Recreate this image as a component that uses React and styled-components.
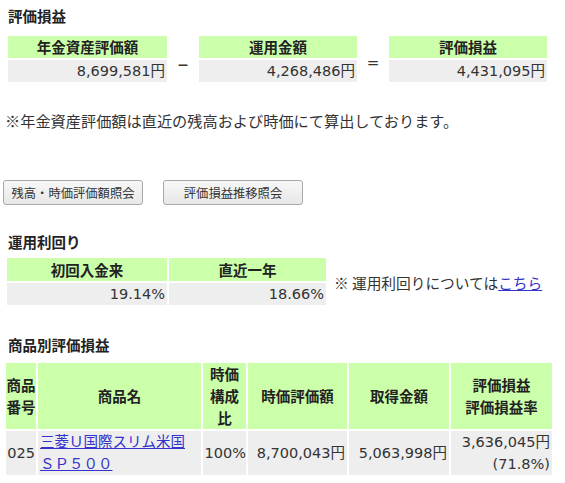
import React from 'react';
import styled, { createGlobalStyle } from 'styled-components';

const GlobalStyle = createGlobalStyle`
  html, body {
    margin: 0;
    padding: 0;
    background: #fff;
  }
  body {
    font-family: "DejaVu Sans", "Noto Sans CJK JP", sans-serif;
    font-size: 14.5px;
    color: #333;
  }
`;

const GREEN = '#ccffaa';
const GRAY = '#eeeeee';

const Page = styled.div`
  width: 565px;
  padding: 5px 0 0 0;
`;

const Title = styled.h2`
  margin: ${({ top }) => top || 0}px 0 0 8px;
  font-size: 14.5px;
  line-height: 22px;
  font-weight: bold;
  color: #222;
  font-family: "Noto Sans CJK JP", sans-serif;
`;

const Summary = styled.div`
  display: flex;
  margin: 9px 0 0 8px;
`;

const SumBox = styled.div`
  width: ${({ w }) => w}px;
  display: flex;
  flex-direction: column;
  gap: 2px;
`;

const SumHead = styled.div`
  height: 22px;
  line-height: 22px;
  background: ${GREEN};
  text-align: center;
  font-weight: bold;
  color: #222;
  font-family: "Noto Sans CJK JP", sans-serif;
`;

const SumValue = styled.div`
  height: 22px;
  line-height: 22px;
  background: ${GRAY};
  text-align: right;
  padding-right: 2px;
`;

const Operator = styled.div`
  width: 32px;
  display: flex;
  align-items: center;
  justify-content: center;
  padding-top: 8px;
  font-size: ${({ size }) => size || 15}px;
  color: #333;
`;

const Note = styled.p`
  margin: 27px 0 0 5px;
  line-height: 22px;
  font-size: 15.2px;
  font-family: "Noto Sans CJK JP", sans-serif;
`;

const ButtonRow = styled.div`
  display: flex;
  gap: 20px;
  margin: 49px 0 0 3px;
`;

const Button = styled.button`
  width: 140px;
  height: 25px;
  padding: 0;
  border: 1px solid #a9a9a9;
  border-radius: 3px;
  background: linear-gradient(#f7f7f7, #e8e8e8);
  font-family: "Noto Sans CJK JP", sans-serif;
  font-size: 12.3px;
  color: #333;
`;

const YieldRow = styled.div`
  display: flex;
  align-items: center;
  gap: 8px;
  margin: 5px 0 0 7px;
`;

const Grid = styled.div`
  display: grid;
  grid-template-columns: ${({ cols }) => cols};
  grid-template-rows: ${({ rows }) => rows};
  gap: 2px;
`;

const HeadCell = styled.div`
  background: ${GREEN};
  display: flex;
  align-items: center;
  justify-content: center;
  text-align: center;
  font-weight: bold;
  line-height: 22px;
  color: #222;
  font-family: "Noto Sans CJK JP", sans-serif;
`;

const Cell = styled.div`
  background: ${GRAY};
  display: flex;
  flex-direction: column;
  justify-content: center;
  align-items: ${({ left }) => (left ? 'flex-start' : 'flex-end')};
  text-align: ${({ left }) => (left ? 'left' : 'right')};
  line-height: 22px;
  padding: 0 ${({ pad }) => (pad === undefined ? 2 : pad)}px;
  white-space: nowrap;
`;

const SideNote = styled.span`
  font-family: "Noto Sans CJK JP", sans-serif;
  font-size: 14.7px;
  padding-top: 2px;
`;

const Link = styled.a`
  color: #3333cc;
  text-decoration: underline;
`;

const Products = styled(Grid)`
  margin: 7px 0 0 6px;
`;

const summary = [
  { label: '年金資産評価額', value: '8,699,581円', w: 159 },
  { label: '運用金額', value: '4,268,486円', w: 158 },
  { label: '評価損益', value: '4,431,095円', w: 158 },
];

export default function App() {
  return (
    <Page>
      <GlobalStyle />
      <Title>評価損益</Title>
      <Summary>
        <SumBox w={summary[0].w}>
          <SumHead>{summary[0].label}</SumHead>
          <SumValue>{summary[0].value}</SumValue>
        </SumBox>
        <Operator size={22}>–</Operator>
        <SumBox w={summary[1].w}>
          <SumHead>{summary[1].label}</SumHead>
          <SumValue>{summary[1].value}</SumValue>
        </SumBox>
        <Operator>=</Operator>
        <SumBox w={summary[2].w}>
          <SumHead>{summary[2].label}</SumHead>
          <SumValue>{summary[2].value}</SumValue>
        </SumBox>
      </Summary>
      <Note>※年金資産評価額は直近の残高および時価にて算出しております。</Note>

      <ButtonRow>
        <Button>残高・時価評価額照会</Button>
        <Button>評価損益推移照会</Button>
      </ButtonRow>

      <Title top={26}>運用利回り</Title>
      <YieldRow>
        <Grid cols="160px 157px" rows="23px 22px">
          <HeadCell>初回入金来</HeadCell>
          <HeadCell>直近一年</HeadCell>
          <Cell>19.14%</Cell>
          <Cell>18.66%</Cell>
        </Grid>
        <SideNote>
          ※ 運用利回りについては<Link href="#">こちら</Link>
        </SideNote>
      </YieldRow>

      <Title top={29}>商品別評価損益</Title>
      <Products cols="30px 163px 43px 99px 100px 101px" rows="66px 44px">
        <HeadCell>商品<br />番号</HeadCell>
        <HeadCell>商品名</HeadCell>
        <HeadCell>時価<br />構成<br />比</HeadCell>
        <HeadCell>時価評価額</HeadCell>
        <HeadCell>取得金額</HeadCell>
        <HeadCell>評価損益<br />評価損益率</HeadCell>
        <Cell pad={1}>025</Cell>
        <Cell left>
          <Link href="#">三菱Ｕ国際スリム米国<br />ＳＰ５００</Link>
        </Cell>
        <Cell pad={0}>100%</Cell>
        <Cell>8,700,043円</Cell>
        <Cell>5,063,998円</Cell>
        <Cell>
          <span>3,636,045円</span>
          <span>(71.8%)</span>
        </Cell>
      </Products>
    </Page>
  );
}
